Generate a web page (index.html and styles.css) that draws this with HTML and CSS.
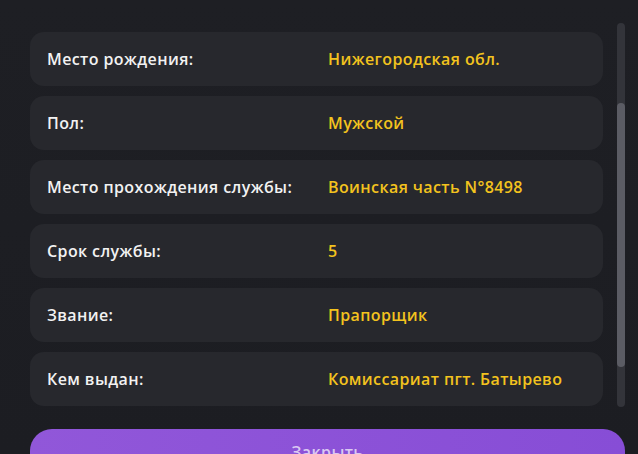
FILE: index.html
```html
<!DOCTYPE html>
<html lang="ru">
<head>
  <meta charset="UTF-8">
  <meta name="viewport" content="width=device-width, initial-scale=1.0">
  <title>Военный билет</title>
  <link rel="stylesheet" href="styles.css">
</head>
<body>
  <div class="sheet">
    <div class="info-list">
      <div class="info-row">
        <span class="info-label">Место рождения:</span>
        <span class="info-value">Нижегородская обл.</span>
      </div>
      <div class="info-row">
        <span class="info-label">Пол:</span>
        <span class="info-value">Мужской</span>
      </div>
      <div class="info-row">
        <span class="info-label">Место прохождения службы:</span>
        <span class="info-value">Воинская часть N°8498</span>
      </div>
      <div class="info-row">
        <span class="info-label">Срок службы:</span>
        <span class="info-value">5</span>
      </div>
      <div class="info-row">
        <span class="info-label">Звание:</span>
        <span class="info-value">Прапорщик</span>
      </div>
      <div class="info-row">
        <span class="info-label">Кем выдан:</span>
        <span class="info-value">Комиссариат пгт. Батырево</span>
      </div>
    </div>

    <button class="close-btn">Закрыть</button>

    <div class="scrollbar"><div class="scrollbar-thumb"></div></div>
  </div>
</body>
</html>
```

FILE: styles.css
```css
body {
  margin: 0;
  background-color: #1c1d22;
  font-family: "Open Sans", "DejaVu Sans", sans-serif;
  overflow: hidden;
}

.sheet {
  position: relative;
  height: 454px;
  padding: 32px 0 0 30px;
  box-sizing: border-box;
  background: linear-gradient(180deg, #1e1f24 0%, #1c1d22 100%);
}

.info-list {
  display: flex;
  flex-direction: column;
  gap: 10px;
  width: 573px;
}

.info-row {
  display: flex;
  align-items: center;
  height: 54px;
  padding-left: 17px;
  background-color: #27282d;
  border-radius: 14px;
  font-size: 16px;
  font-weight: 600;
  letter-spacing: 0.4px;
}

.info-label {
  width: 281px;
  color: #f2f2f2;
}

.info-value {
  color: #f3c31e;
}

.close-btn {
  display: block;
  margin-top: 23px;
  width: 595px;
  height: 52px;
  padding: 0 0 6px;
  border: none;
  border-radius: 22px;
  background: linear-gradient(90deg, #9157d9 0%, #874dd6 100%);
  color: rgba(255, 255, 255, 0.7);
  font-family: inherit;
  font-size: 16px;
  font-weight: 600;
  letter-spacing: 0.4px;
}

/* overlay scrollbar */
.scrollbar {
  position: absolute;
  left: 617px;
  top: 23px;
  width: 8px;
  height: 384px;
  border-radius: 4px;
  background-color: #33343a;
}

.scrollbar-thumb {
  margin-top: 80px;
  height: 264px;
  border-radius: 4px;
  background-color: #5b5c64;
}
```
